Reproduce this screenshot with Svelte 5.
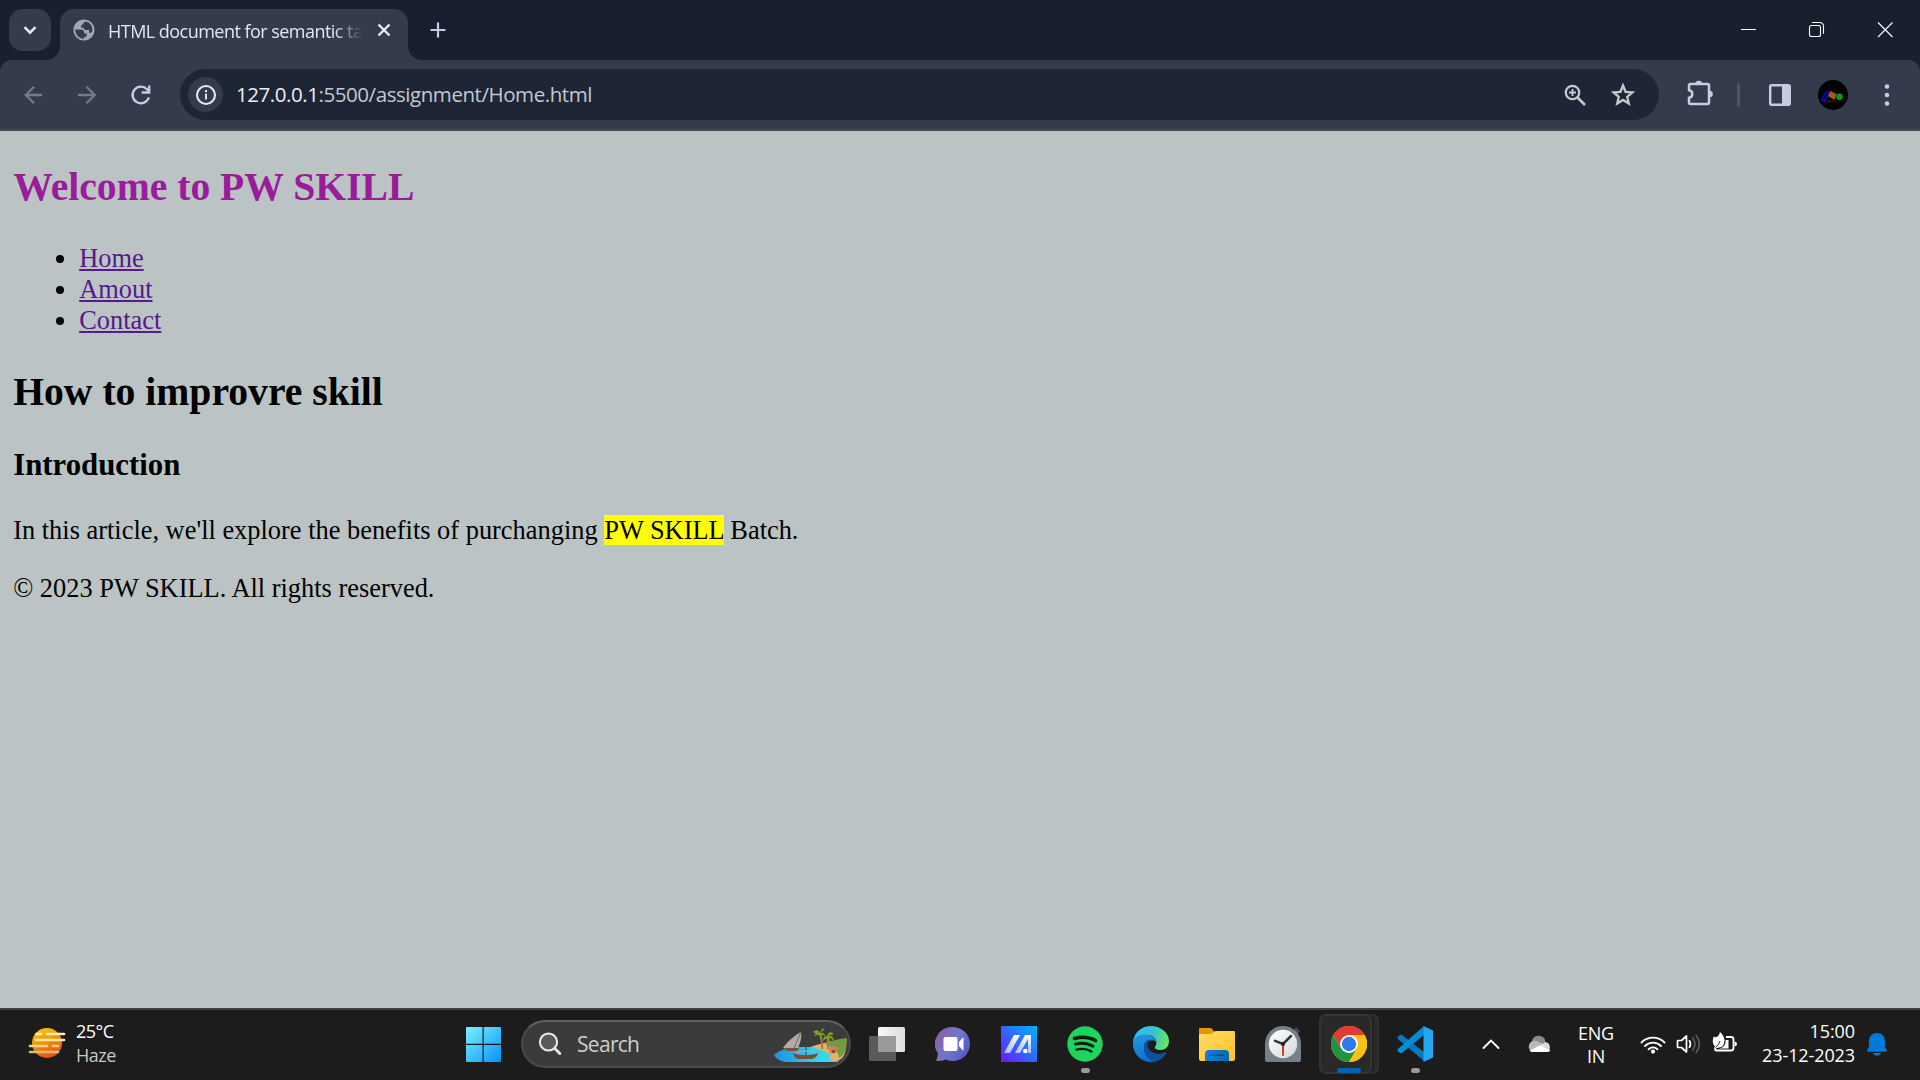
<script>
  const links = ['Home', 'Amout', 'Contact'];
</script>

<div class="screen">
  <header class="strip">
    <button class="tabsearch" aria-label="Search tabs">
      <svg width="42" height="42" viewBox="0 0 42 42"><path d="M15.5 18.2l5.5 5.5 5.5-5.5" fill="none" stroke="#e4e7f0" stroke-width="2.6" /></svg>
    </button>
    <div class="tab">
      <svg class="flare left" width="14" height="14" viewBox="0 0 14 14"><path d="M14 0v14H0C8 14 14 8 14 0z" fill="#343c4c" /></svg>
      <svg class="favicon" width="22" height="22" viewBox="0 0 22 22">
        <circle cx="11" cy="11" r="10.6" fill="#a2a8b0" />
        <path d="M2.300 10.500h5c2.600 0 3.800 1.200 3.800 3v1.100h2.500v3.200h-2.500v1.900C6 19.700 2.100 15.500 2.300 10.500zM12.700 2.600c-1.800.6-2.300 1.400-2.300 2.700-1.200 0-2.200.6-2.200 2v1.400h2.600c0 1.400.6 2.200 2 2.200h3.300v3c2.300.2 3-.8 3.300-2.200C19.600 7 17 3.400 12.700 2.600z" fill="#343c4c" />
      </svg>
      <span class="title">HTML document for semantic ta</span>
      <svg class="close" width="14" height="14" viewBox="0 0 14 14"><path d="M1.500 1.500l11 11M12.500 1.500l-11 11" stroke="#e6e9f0" stroke-width="2.400" /></svg>
      <svg class="flare right" width="14" height="14" viewBox="0 0 14 14"><path d="M0 0v14h14C6 14 0 8 0 0z" fill="#343c4c" /></svg>
    </div>
    <svg class="plus" width="16" height="16" viewBox="0 0 16 16"><path d="M8 .5v15M.5 8h15" stroke="#c5cce4" stroke-width="2.200" /></svg>
    <div class="window">
      <svg width="69" height="60" viewBox="0 0 69 60"><path d="M28 29.500h15" stroke="#fff" /></svg>
      <svg width="69" height="60" viewBox="0 0 69 60" fill="none" stroke="#fff" stroke-width="1.100"><rect x="27.500" y="25.500" width="11" height="11" rx="2" /><path d="M30 22.500h7.500c2.700 0 4 1.500 4 4v7.300" /></svg>
      <svg width="69" height="60" viewBox="0 0 69 60"><path d="M27 22.500l14.500 14.500M41.500 22.500L27 37" stroke="#fff" stroke-width="1.100" /></svg>
    </div>
  </header>

  <nav class="toolbar">
    <svg width="54" height="40" viewBox="0 0 54 40" fill="none" stroke="#747b8a" stroke-width="2.300"><path d="M36 20H19M28 11.800L19.800 20l8.200 8.200" /></svg>
    <svg width="54" height="40" viewBox="0 0 54 40" fill="none" stroke="#747b8a" stroke-width="2.300"><path d="M18 20h17M26.500 11.800l8.200 8.200-8.200 8.200" /></svg>
    <svg width="54" height="40" viewBox="0 0 54 40" fill="none" stroke="#c5cce4" stroke-width="2.400"><path d="M34.800 22.500A8.300 8.300 0 1 1 33 14.300l2 2.200M35.200 10.500v7h-7.500" /></svg>
    <div class="omnibox">
      <span class="site"><svg width="22" height="22" viewBox="0 0 22 22"><circle cx="11" cy="11" r="9" fill="none" stroke="#e4e6ee" stroke-width="2.100" /><path d="M11 9.800v5.700M11 6v2.200" stroke="#e4e6ee" stroke-width="2" /></svg></span>
      <span class="url"><b>127.0.0.1</b>:5500/assignment/Home.html</span>
      <svg class="lens" width="24" height="24" viewBox="0 0 24 24" fill="none" stroke="#c7c7cc"><circle cx="9.500" cy="9.500" r="6.700" stroke-width="2.300" /><path d="M14.500 14.500l7.500 7.500" stroke-width="2.700" /><path d="M9.500 6v7M6 9.500h7" stroke-width="1.900" /></svg>
      <svg class="star" width="26" height="26" viewBox="0 0 26 26"><path d="M13 3.500l2.600 6.300 6.800.6-5.200 4.400 1.600 6.700-5.800-3.600-5.800 3.600 1.600-6.700-5.200-4.400 6.800-.6z" fill="none" stroke="#c7c7cc" stroke-width="2.300" /></svg>
    </div>
    <svg class="ext" width="30" height="30" viewBox="0 0 30 30"><path d="M6 7h17.500q1.500 0 1.500 1.500v17q0 1.500-1.500 1.500H6.500Q5 27 5 25.500v-4.700q3.300-.5 3.300-3.800T5 13.200V8.500Q5 7 6.500 7z" fill="none" stroke="#c5cce4" stroke-width="2.500" stroke-linejoin="round" /><path d="M11.500 7a3.300 3.300 0 0 1 6.600 0zM25.500 13.700a3.300 3.300 0 0 1 0 6.600z" fill="#c5cce4" /></svg>
    <i class="sep"></i>
    <svg class="panel" width="24" height="24" viewBox="0 0 24 24"><rect x="2.200" y="2.200" width="19.600" height="19.600" rx="1.500" fill="none" stroke="#c5cce4" stroke-width="2.400" /><path d="M14 2h8v20h-8z" fill="#c5cce4" /></svg>
    <svg class="avatar" width="30" height="30" viewBox="0 0 30 30"><circle cx="15" cy="15" r="15" fill="#020202" /><path d="M3.500 20.500C5 15 8.500 11 11 11.500c1 1.500-2 6.500-4.500 9z" fill="#060650" stroke="#0808c0" stroke-width="1.400" /><path d="M5 21.200h11" stroke="#5a0860" /><path d="M12.500 11l6 3-2 6-6.500-4z" fill="#a85a14" /><circle cx="21.500" cy="16.800" r="3.300" fill="#0c9a1d" /><path d="M16 21h12" stroke="#381000" /></svg>
    <svg class="dots" width="6" height="24" viewBox="0 0 6 24" fill="#c5cce4"><circle cx="3" cy="3.500" r="2.300" /><circle cx="3" cy="12" r="2.300" /><circle cx="3" cy="20.500" r="2.300" /></svg>
  </nav>

  <main>
    <h1 class="welcome">Welcome to PW SKILL</h1>
    <ul>
      {#each links as link}
        <li><span class="link">{link}</span></li>
      {/each}
    </ul>
    <h2>How to improvre skill</h2>
    <h3>Introduction</h3>
    <p>In this article, we'll explore the benefits of purchanging <mark>PW SKILL</mark> Batch.</p>
    <p>© 2023 PW SKILL. All rights reserved.</p>
  </main>

  <footer>
    <svg class="sun" width="38" height="36" viewBox="0 0 38 36">
      <defs><linearGradient id="sun" x1="0" y1="0" x2=".4" y2="1"><stop stop-color="#fdd307" /><stop offset="1" stop-color="#e85a08" /></linearGradient></defs>
      <circle cx="19" cy="17" r="15" fill="url(#sun)" />
      <g stroke-width="2.700" stroke-linecap="round"><path d="M8.500 8h4.500M19 8h17" stroke="#fff0b8" /><path d="M8 14h28" stroke="#ffe9a8" /><path d="M2 20h17M25 20h5" stroke="#efd08c" /><path d="M2 26h28" stroke="#ddb878" /></g>
    </svg>
    <div class="weather"><span>25°C</span><span class="dim">Haze</span></div>

    <div class="apps">
      <div class="app"><svg width="36" height="36" viewBox="0 0 36 36">
        <defs><linearGradient id="win" x1="0" y1="0" x2="36" y2="36" gradientUnits="userSpaceOnUse"><stop stop-color="#7df5ff" /><stop offset="1" stop-color="#0692ff" /></linearGradient></defs>
        <path d="M2 1h15.500v16.700H1V2q0-1 1-1zM18.700 1H35q1 0 1 1v15.700H18.700zM1 19h16.500v17H2q-1 0-1-1zM18.700 19H36v16q0 1-1 1H18.700z" fill="url(#win)" />
      </svg></div>
      <div class="search">
        <svg class="glass" width="24" height="26" viewBox="0 0 24 26"><circle cx="10.500" cy="11" r="8.600" fill="#5a5a5a" stroke="#eee" stroke-width="2" /><path d="M16.800 17.500l5 5" stroke="#dfe2ea" stroke-width="3" stroke-linecap="round" /></svg>
        <span>Search</span>
        <svg class="island" width="74" height="36" viewBox="0 0 74 36">
          <defs><linearGradient id="sea"><stop stop-color="#218ee0" /><stop offset=".7" stop-color="#35d5ee" /><stop offset="1" stop-color="#37e3dc" /></linearGradient></defs>
          <path d="M1 27c5-5 14-7 24-8h22l20 6c1 5-1 9-4 9H12C7 33 2 30 1 27z" fill="url(#sea)" />
          <path d="M37 19c9-3 20-6 36-8v9c-1 8-4 12-10 13-7 0-9-3-4-6-6-2-10-6-22-8z" fill="#ddb66c" />
          <path d="M52 16c6-3 14-5.500 22-6 0 9-1 16-8 20 0-6-5-10-14-14z" fill="#719b3d" />
          <path d="M28 4C21 8 14 14 10 20c6 2 12 1 15 0 2-5 4-10 3-16z" fill="#b6aaa2" /><path d="M28 4l-7 16" stroke="#7a655a" />
          <path d="M11 20h15l-2 3H14z" fill="#785034" /><path d="M20 25c6 3 17 3 25 0-1 4-4 6-8 6H27c-4 0-6-2-7-6z" fill="#7b4b2c" /><path d="M33 13v14" stroke="#563a2c" /><path d="M23 25c4-2 14-2 21-1" fill="none" stroke="#c9a27a" stroke-width="1.200" />
          <path d="M49 21c1-6-1-10-2-16M55 21c0-5-1-8 0-13" fill="none" stroke="#a47738" stroke-width="1.800" />
          <path d="M41 9c1-4 4-5 6-4 2-1 5 0 6 4-2-2-4-2.500-5-2 1 1 1 3-1 5 0-3 0-4-1-5-2 0-3 0-5 2zM40 4c3-3 6-2 7 1l-4 1zM47 5c1-4 3-5 5-4zM50 13c0-5 3-5 5-5 3-1 6 1 6 5-2-2-3-3-5-3 1 1 1 4 0 6l-2-6zM54 8c1-4 4-5 7-2z" fill="#809f20" />
          <path d="M56 21c2-4 8-4 9 0l-2 4h-6z" fill="#cf7b65" /><path d="M59 22h3v3h-3z" fill="#8b4b32" />
        </svg>
      </div>
      <div class="app"><svg width="36" height="36" viewBox="0 0 36 36">
        <defs><linearGradient id="tv"><stop stop-color="#f8f8f8" /><stop offset="1" stop-color="#dedede" /></linearGradient></defs>
        <rect x="9" y="1" width="27" height="25" rx="1.500" fill="url(#tv)" /><rect y="10" width="27" height="25" rx="1.500" fill="#5a5a5a" /><path d="M9 10h18v16H9z" fill="#9a9a9a" />
      </svg></div>
      <div class="app"><svg width="36" height="36" viewBox="0 0 36 36">
        <defs><linearGradient id="chat" x1="0" y1=".2" x2="1" y2=".8"><stop stop-color="#8a609e" /><stop offset=".5" stop-color="#7276cb" /><stop offset="1" stop-color="#5156c4" /></linearGradient></defs>
        <path d="M18.500 1a17 17 0 1 1-7 32.500c-3 1.200-6.500 1.800-10 1.200 1.200-2.300 1.500-4.500 2-7A17 17 0 0 1 18.500 1z" transform="translate(-.5 0)" fill="url(#chat)" /><rect x="8.500" y="11" width="14" height="14" rx="2" fill="#fff" /><path d="M24 16l3.500-4q1-1 1 0v12q0 1-1 0L24 20z" fill="#fff" />
      </svg></div>
      <div class="app"><svg width="36" height="36" viewBox="0 0 36 36">
        <defs><linearGradient id="ma" x1="0" y1="1" x2="1" y2="0"><stop stop-color="#6918ff" /><stop offset=".55" stop-color="#2b70ff" /><stop offset="1" stop-color="#00b3ff" /></linearGradient><linearGradient id="mw" x1="0" y1="0" x2="0" y2="1"><stop stop-color="#fff" /><stop offset="1" stop-color="#a9bcff" /></linearGradient></defs>
        <path d="M0 0h36v36H0z" fill="url(#ma)" /><path d="M13 9h6L9 27H3zM24 9h6v18h-3V13l-8 14h-5z" fill="url(#mw)" /><circle cx="24.300" cy="25" r="2.300" fill="#fff" />
      </svg></div>
      <div class="app running"><svg width="36" height="36" viewBox="0 0 36 36"><circle cx="18" cy="18" r="17.700" fill="#1ed45f" /><g fill="none" stroke="#081c0e" stroke-linecap="round"><path d="M7.500 12.500c7-2 15.500-1.300 21 2" stroke-width="3.500" /><path d="M8.500 18.200c6.500-1.700 12.500-1 17.500 2" stroke-width="2.800" /><path d="M9.500 23.600c5.500-1.400 10.500-.8 15 1.900" stroke-width="2.200" /></g></svg></div>
      <div class="app"><svg width="36" height="36" viewBox="0 0 36 36">
        <defs><linearGradient id="ea" x1="0" y1=".3" x2="1" y2=".5"><stop stop-color="#35b8f5" /><stop offset=".55" stop-color="#32c6d0" /><stop offset="1" stop-color="#65e65b" /></linearGradient><linearGradient id="eb" x1="0" y1="0" x2=".4" y2="1"><stop stop-color="#249ae0" /><stop offset="1" stop-color="#0c6fd0" /></linearGradient></defs>
        <path d="M0 16C1 6 9 0 18 0c10 0 18 7 18 15 0 6-4 9-8 9-5 0-7-2-6-3 4-6-1-12-8-12C8 9 3 12 0 16z" fill="url(#ea)" />
        <path d="M0 18C0 12 5 8.500 11 8.500c7 0 12 4 12.500 8-2-3-7-3-9 0-4 6 1 14 9 14 4 0 7-2 9-3-3 5-8 8.500-14.500 8.500C8 36 0 28 0 18z" fill="url(#eb)" />
        <path d="M11 20c0-3 3-7 6-6-6 6 0 13 8 14 3 .2 5-1 7.500-2 1.500 0 .5 2-.5 3-4 5-8 6.500-12 6.500-6-2-10-9-9-15.500z" fill="#104f9d" />
      </svg></div>
      <div class="app"><svg width="36" height="36" viewBox="0 0 36 36">
        <defs><linearGradient id="fo" x1="0" y1="0" x2="1" y2="1"><stop stop-color="#ffdc68" /><stop offset="1" stop-color="#ffc126" /></linearGradient><linearGradient id="fb"><stop stop-color="#0f83dc" /><stop offset="1" stop-color="#0866b4" /></linearGradient></defs>
        <path d="M0 3q0-1 1-1h10q2 0 3 2l2 3-4 3H0z" fill="#dd9a05" /><path d="M0 8h11q2 0 3-1.500T17 5h18q1 0 1 1v27q0 2-2 2H2q-2 0-2-2z" fill="url(#fo)" /><path d="M6 35v-7q0-4 4-4h16q4 0 4 4v7z" fill="url(#fb)" /><path d="M11 29.200h14" stroke="#084d87" stroke-width="1.500" stroke-linecap="round" />
      </svg></div>
      <div class="app"><svg width="36" height="36" viewBox="0 0 36 36">
        <defs><linearGradient id="ck" x1="0" y1="0" x2="1" y2="1"><stop stop-color="#fff" /><stop offset="1" stop-color="#d5d8db" /></linearGradient></defs>
        <path d="M28 5l3-4 4 4-2 3z" fill="#454b51" /><path d="M0 18a18 18 0 0 1 36 0v16q0 2-2 2H2q-2 0-2-2z" fill="#75808a" /><circle cx="18" cy="18" r="14.200" fill="url(#ck)" /><path d="M18 18v11" stroke="#d83b12" stroke-width="2" stroke-linecap="round" /><path d="M10 14.800l8 3.200 8-8" fill="none" stroke="#35393e" stroke-width="2.500" stroke-linecap="round" /><circle cx="18" cy="18" r="2" fill="#222" />
      </svg></div>
      <div class="app active"><i class="stack"></i><i class="front"></i><svg width="36" height="36" viewBox="0 0 36 36">
        <circle cx="18" cy="18" r="18" fill="#fcc31e" /><path d="M2.400 9A18 18 0 0 1 33.600 9H18l-7.800 13.500z" fill="#e33b2e" /><path d="M2.400 9A18 18 0 0 0 18 36l7.800-13.500L18 18l-7.800 4.500z" fill="#229342" /><path d="M18 9h15.600A18 18 0 0 1 18 36l7.800-13.500z" fill="#fbc116" /><circle cx="18" cy="18" r="9" fill="#fff" /><circle cx="18" cy="18" r="7.200" fill="#2c7cf0" />
      </svg></div>
      <div class="app running"><svg width="36" height="36" viewBox="0 0 36 36"><path d="M1 10.500l2-1.500q1-.7 2 0l22 17v9L.8 13q-1-1.300.2-2.500z" fill="#0878be" /><path d="M1 25.500l2 1.500q1 .7 2 0L27 9V0L.8 23q-1 1.300.2 2.500z" fill="#078bd5" /><path d="M26.500 0L36 4.500v27L26.500 36z" fill="#24a5f2" /></svg></div>
    </div>

    <div class="tray">
      <svg class="chev" width="18" height="12" viewBox="0 0 18 12"><path d="M1.500 10L9 2.500l7.500 7.500" fill="none" stroke="#fff" stroke-width="1.900" stroke-linecap="round" /></svg>
      <svg class="cloud" width="26" height="18" viewBox="0 0 26 18"><path d="M5 5.500a7 7 0 0 1 13.500 1L10 12z" fill="#8a8a8a" /><path d="M5.500 17A5.800 5.800 0 1 1 10 6l9 5-10 6z" fill="#b9b9b9" /><path d="M10 12l8-5a5.300 5.300 0 0 1 2 10z" fill="#d9d9d9" /><path d="M2.500 15.500L13 10.500l10.500 5Q22 17 20 17H5.500q-2 0-3-1.500z" fill="#fff" /></svg>
      <div class="lang"><span>ENG</span><span>IN</span></div>
      <svg class="wifi" width="26" height="20" viewBox="0 0 26 20" fill="none" stroke="#fff" stroke-width="1.800" stroke-linecap="round"><path d="M1.500 8.500a16.200 16.200 0 0 1 23 0M5 12a11.300 11.300 0 0 1 16 0M8.500 15.300a6.400 6.400 0 0 1 9 0" /><circle cx="13" cy="17.600" r="1.200" fill="#fff" /></svg>
      <svg class="vol" width="26" height="22" viewBox="0 0 26 22" fill="none" stroke="#fff" stroke-width="1.700" stroke-linejoin="round" stroke-linecap="round"><path d="M2 7.500h3.500L10.500 3v16l-5-4.500H2q-.5 0-.5-.5V8q0-.5.500-.5z" /><path d="M13.500 7.800q2 3.200 0 6.400" /><path d="M16.800 5q4.200 6 0 12M20.200 2.500q6.200 8.500 0 17" stroke="#5a5a5a" /></svg>
      <svg class="batt" width="26" height="22" viewBox="0 0 26 22"><path d="M14 5h5q2.500 0 2.500 2.500v8.500q0 2.500-2.500 2.500H5.500q-2 0-3-1" fill="none" stroke="#fff" stroke-width="1.800" /><path d="M22.500 9.500q2.500.3 2.500 2.500t-2.500 2.500zM13.500 8h3v8.500H7c5-1 7-4 6.500-8.500z" fill="#fff" /><path d="M8 0q4.500 4 4.500 9Q12 15 7 15.500q-2.500 0-3.500 1.500l-1.500.5q0-2 1-3Q.5 12.500.8 9 .8 7 1.800 4.500 4 6 5.500 4.500 7.500 3 8 0z" fill="#fff" /><path d="M3.500 15.500q3-2 4.500-6.500" fill="none" stroke="#1c1c1c" /></svg>
      <div class="time"><span>15:00</span><span>23-12-2023</span></div>
      <svg class="bell" width="20" height="24" viewBox="0 0 20 24"><path d="M10 1c5 0 8 3.500 8 8v5.500l1.800 3.500q.5 1.700-1 1.700H1.200q-1.500 0-1-1.700L2 14.500V9c0-4.500 3-8 8-8zM6 21h8q-1 2.800-4 2.800T6 21z" fill="#0078d7" /></svg>
    </div>
  </footer>
</div>

<style>
  :global(body) { margin: 0; overflow: hidden; }
  .screen { width: 1920px; height: 1080px; display: flex; flex-direction: column; background: #182030; font-family: "Open Sans", "Noto Sans", sans-serif; overflow: hidden; }
  svg { display: block; flex: none; }
  .strip { height: 60px; flex: none; display: flex; }
  .tabsearch { width: 42px; height: 42px; margin: 9px 9px 0; padding: 0; border: 0; border-radius: 14px; background: #343c4c; }
  .tab { position: relative; width: 348px; height: 51px; margin-top: 9px; border-radius: 14px 14px 0 0; background: #343c4c; display: flex; }
  .flare { position: absolute; bottom: 0; }
  .left { left: -14px; }
  .right { right: -14px; }
  .favicon { margin: 10px 0 0 13px; }
  .title { width: 255px; margin: 10px 0 0 13px; white-space: nowrap; font-size: 18px; line-height: 25px; letter-spacing: -.53px; color: #e4e6ee; mask-image: linear-gradient(90deg, #000 226px, transparent 254px); }
  .close { margin: 14px 0 0 14px; }
  .plus { margin: 22px 0 0 22px; }
  .window { display: flex; margin-left: auto; }
  .toolbar { width: 1914px; height: 69px; flex: none; background: #343c4c; border-radius: 12px 12px 0 0; border-bottom: 2px solid #4a4a50; display: flex; align-items: center; padding-left: 6px; }
  .omnibox { width: 1479px; height: 51px; margin-left: 12px; border-radius: 26px; background: #1e2636; display: flex; align-items: center; }
  .site { width: 35px; height: 35px; border-radius: 50%; background: #343c4c; display: grid; place-items: center; margin-left: 8px; }
  .url { margin: -1px 0 0 13px; font-size: 20.5px; letter-spacing: -.44px; color: #c5c8ce; }
  .url b { font-weight: 400; color: #eceef4; }
  .lens { margin-left: auto; }
  .star { margin: 0 23px 0 23px; }
  .ext { margin-left: 25px; margin-top: -5px; }
  .sep { width: 3px; height: 24px; border-radius: 2px; background: #4d5668; margin-left: 23px; }
  .panel { margin-left: 28px; }
  .avatar { margin-left: 26px; }
  .dots { margin-left: 36px; }
  main { flex: 1; font-family: "Liberation Serif", serif; font-size: 26.4px; line-height: 31px; color: #000; padding: 33px 13.2px 0; background: #bbc3c4; }
  h1, h2 { font-size: 39.65px; line-height: 46px; margin: 0 0 33px; }
  .welcome { color: #9a1c9a; }
  ul { margin: 0 0 33px; padding-left: 66px; }
  .link { color: #551a8b; text-decoration: underline; }
  h3 { font-size: 30.8px; line-height: 35px; margin: 0 0 32px; }
  p { margin: 0 0 27px; }
  mark { background: #ff0; color: #000; }
  footer { height: 70px; flex: none; border-top: 2px solid #404040; background: #1c1c1c; display: flex; color: #fff; font-size: 18px; line-height: 24px; }
  .sun { margin: 16px 0 0 28px; }
  .weather, .lang, .time { display: flex; flex-direction: column; }
  .weather { margin: 9px 0 0 10px; width: 120px; letter-spacing: -.5px; }
  .dim { color: #c8c8c8; }
  .apps { display: flex; margin-left: 254px; }
  .app { width: 66px; height: 70px; display: flex; justify-content: center; padding-top: 16px; box-sizing: border-box; position: relative; }
  .search { width: 330px; height: 48px; margin: 10px 3px 0 5px; border: 2px solid #4a4a4a; border-top-color: #606060; border-radius: 24px; background: #3b3b3b; box-sizing: border-box; display: flex; align-items: center; font-size: 21px; color: #cfcfcf; }
  .glass { margin-left: 15px; }
  .search span { margin-left: 15px; letter-spacing: -.7px; }
  .island { margin: 3px 2px 0 auto; }
  .running::after, .active::after { content: ""; position: absolute; left: 29px; top: 58px; width: 9px; height: 5px; border-radius: 3px; background: #9a9a9a; }
  .active::after { left: 21px; width: 24px; background: #0063b1; }
  .active svg { position: relative; }
  .stack, .front { position: absolute; top: 4px; height: 60px; box-sizing: border-box; border: 2px solid #353535; border-radius: 7px; background: #292929; }
  .stack { left: 9px; width: 54px; border-color: #303030; background: #262626; }
  .front { left: 3px; width: 53px; box-shadow: 1px 0 0 #1c1c1c; }
  .tray { display: flex; }
  .chev { margin: 28px 0 0 34px; }
  .cloud { margin: 25px 0 0 27px; }
  .lang { width: 68px; margin: 12px 0 0 9px; align-items: center; line-height: 23px; letter-spacing: -.2px; }
  .wifi { margin: 24px 0 0 10px; }
  .vol { margin: 23px 0 0 10px; }
  .batt { margin: 22px 0 0 10px; }
  .time { width: 117px; margin-top: 9px; align-items: flex-end; letter-spacing: -.1px; }
  .bell { margin: 22px 0 0 12px; }
</style>
